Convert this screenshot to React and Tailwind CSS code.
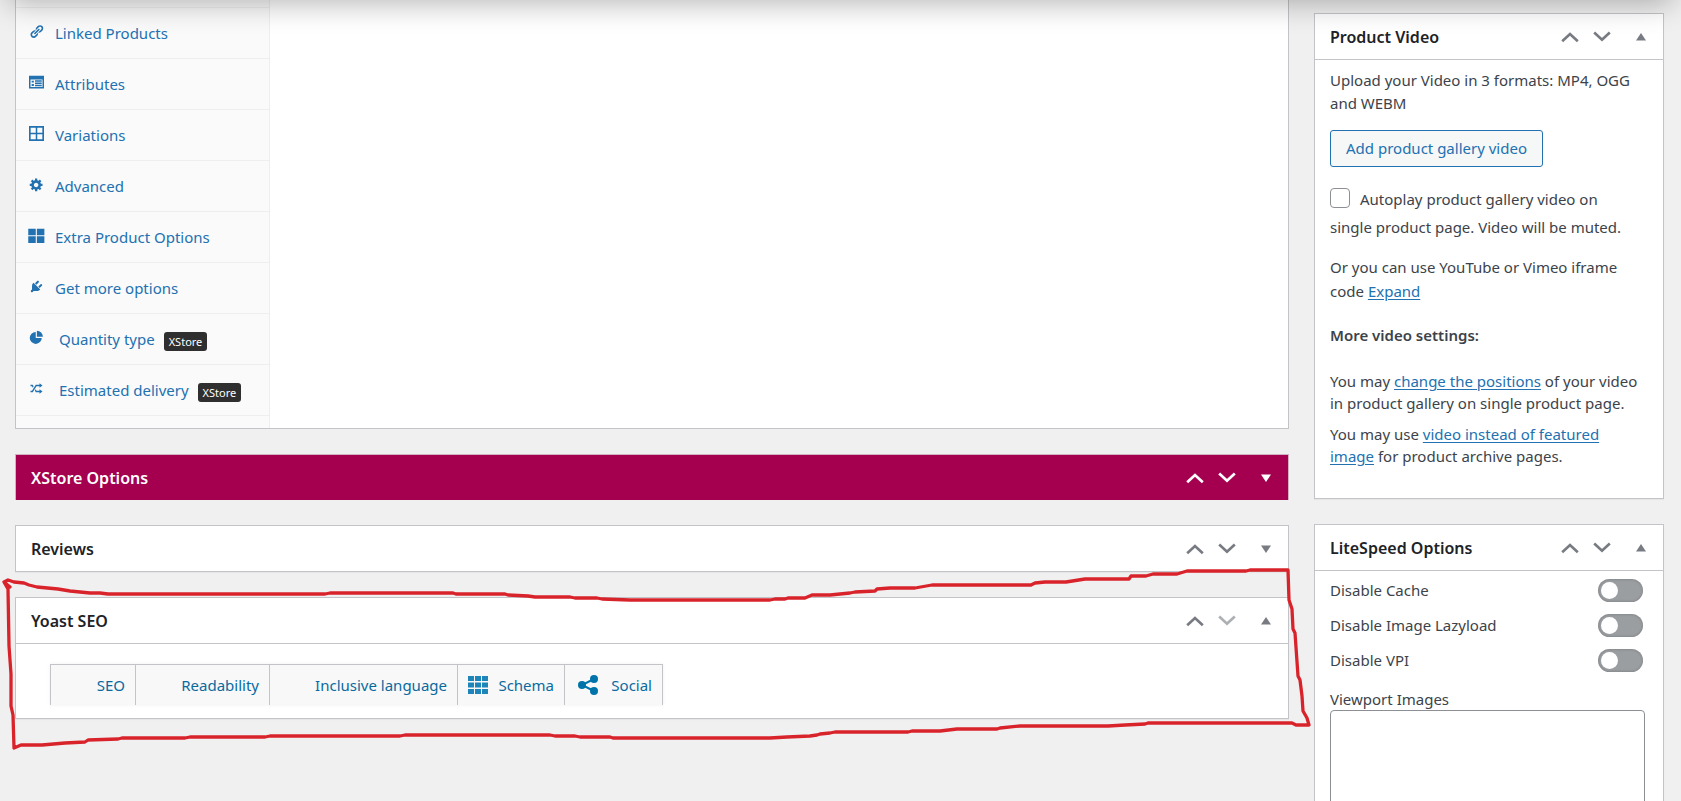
import React from 'react';

const tabs = [
  { label: 'Linked Products', icon: 'link' },
  { label: 'Attributes', icon: 'attributes' },
  { label: 'Variations', icon: 'variations' },
  { label: 'Advanced', icon: 'gear' },
  { label: 'Extra Product Options', icon: 'blocks' },
  { label: 'Get more options', icon: 'plug' },
  { label: 'Quantity type', icon: 'pie', badge: 'XStore' },
  { label: 'Estimated delivery', icon: 'shuffle', badge: 'XStore' },
];

const cacheOptions = [
  { id: 'disable-cache', label: 'Disable Cache' },
  { id: 'disable-lazyload', label: 'Disable Image Lazyload' },
  { id: 'disable-vpi', label: 'Disable VPI' },
];

// 20x20 glyphs
const glyphs = {
  link: (
    <path d="M17.74 2.76c1.68 1.69 1.68 4.41 0 6.1l-1.53 1.52c-1.12 1.12-2.7 1.47-4.14 1.09l2.62-2.61.76-.77.76-.76c.84-.84.84-2.2 0-3.04-.84-.85-2.2-.85-3.04 0l-.77.76-3.38 3.38c-.37-1.44-.02-3.02 1.1-4.14l1.52-1.53c1.69-1.68 4.42-1.68 6.1 0zM8.59 13.43l5.34-5.34c.42-.42.42-1.1 0-1.52-.44-.43-1.13-.39-1.53 0l-5.33 5.34c-.42.42-.42 1.1 0 1.52.44.43 1.13.39 1.52 0zm-.76 2.29l4.14-4.15c.38 1.44.03 3.02-1.09 4.14l-1.52 1.53c-1.69 1.68-4.41 1.68-6.1 0-1.68-1.68-1.68-4.42 0-6.1l1.53-1.52c1.12-1.12 2.7-1.47 4.14-1.1l-4.14 4.15c-.85.84-.85 2.2 0 3.05.84.84 2.2.84 3.04 0z" />
  ),
  attributes: (
    <path fillRule="evenodd" d="M0 1h20v17H0zM2 6v10h16V6zM3.500 7.500h3v2.500h-3zM8 7h9v2H8zM8 10h9v2H8zM8 13h9v2H8zM3.500 12h3v2.500h-3z" />
  ),
  variations: (
    <path fillRule="evenodd" d="M0 0h20v20H0zM2.200 2.200V9H9V2.200zM11 2.200V9h6.800V2.200zM2.200 11v6.800H9V11zM11 11v6.800h6.800V11z" />
  ),
  gear: (
    <path d="M18 12h-2.180c-.17.7-.44 1.350-.81 1.930l1.540 1.540-2.100 2.100-1.540-1.540c-.58.36-1.230.63-1.910.79V19H8v-2.180c-.68-.16-1.330-.43-1.910-.79l-1.540 1.540-2.120-2.120 1.540-1.540c-.36-.58-.63-1.230-.79-1.910H1V9.030h2.170c.16-.7.44-1.350.8-1.940L2.430 5.550l2.100-2.100 1.540 1.540c.58-.37 1.240-.64 1.930-.81V2h3v2.180c.68.16 1.330.43 1.910.79l1.540-1.540 2.120 2.120-1.540 1.540c.36.59.64 1.240.8 1.940H18V12zm-8.500 1.500c1.660 0 3-1.340 3-3s-1.340-3-3-3-3 1.340-3 3 1.340 3 3 3z" />
  ),
  blocks: <path d="M-1 1h10v8.500H-1zM10.500 1h10v8.500h-10zM-1 11h10v9H-1zM10.500 11h10v9h-10z" />,
  plug: (
    <path d="M13.110 4.360L9.870 7.600 8 5.730l3.240-3.240c.35-.34 1.050-.2 1.560.32.52.51.66 1.210.31 1.550zm-8 1.770l.91-1.120 9.010 9.010-1.190.84c-.71.71-2.630 1.160-3.820 1.160H6.140L4.900 17.260c-.59.59-1.540.59-2.120 0-.59-.58-.59-1.530 0-2.120l1.240-1.240v-3.880c0-1.130.4-3.190 1.090-3.890zm7.260 3.970l3.240-3.240c.34-.35 1.040-.21 1.550.31.52.51.66 1.210.31 1.550l-3.240 3.250z" />
  ),
  pie: (
    <path d="M9 2.500a8 8 0 1 0 8 8H9zM10.500 1v8H18.500A8 8 0 0 0 10.500 1z" />
  ),
  shuffle: (
    <path d="M18 6.010L14 9V7h-4l-5 8H2v-2h2l5-8h5V3zM2 5h3l1.150 2.170-1.120 1.800L4 7H2V5zm16 9.010L14 17v-2H9l-1.150-2.170 1.120-1.800L10 13h4v-2z" />
  ),
};

function Glyph({ name }) {
  return (
    <svg viewBox="0 0 20 20" className="size-[15px] shrink-0 overflow-visible" fill="currentColor" aria-hidden="true">
      {glyphs[name]}
    </svg>
  );
}

function HandleButtons({ open, lastItem }) {
  return (
    <div className="flex items-center">
      <button type="button" aria-label="Move up" className="flex w-8 justify-center">
        <svg width="18" height="12" viewBox="0 0 18 12" fill="none" stroke="currentColor" strokeWidth="2.700">
          <path d="M1.200 10.200L9 3l7.800 7.200" />
        </svg>
      </button>
      <button type="button" aria-label="Move down" className={lastItem ? 'flex w-8 justify-center opacity-60' : 'flex w-8 justify-center'}>
        <svg width="18" height="12" viewBox="0 0 18 12" fill="none" stroke="currentColor" strokeWidth="2.700">
          <path d="M1.200 1.500L9 8.700l7.800-7.200" />
        </svg>
      </button>
      <button type="button" aria-label="Toggle panel" className="flex w-[45px] justify-center">
        <svg width="10" height="8" viewBox="0 0 10 8" fill="currentColor">
          {open ? <path d="M5 0l5 7.500H0z" /> : <path d="M0 .5h10L5 8z" />}
        </svg>
      </button>
    </div>
  );
}

function Postbox({ title, open = false, lastItem = false, children }) {
  return (
    <section className="border border-[#c3c4c7] bg-white shadow-[0_1px_1px_rgba(0,0,0,0.04)]">
      <div className={open ? 'flex h-[46px] items-center justify-between border-b border-[#c3c4c7] pl-[15px] text-[#787c82]' : 'flex h-[45px] items-center justify-between pl-[15px] text-[#787c82]'}>
        <h2 className="text-[16px] font-semibold text-[#1d2327]">{title}</h2>
        <HandleButtons open={open} lastItem={lastItem} />
      </div>
      {children}
    </section>
  );
}

function ProductData() {
  return (
    <section className="flex border border-t-0 border-[#c3c4c7] bg-white">
      <ul className="w-[254px] border-r border-[#eee] bg-[#fafafa] pb-3 pt-[7px]">
        {tabs.map((tab, i) => (
          <li key={tab.label} className={i === 0 ? 'border-y border-[#eee]' : 'border-b border-[#eee]'}>
            <a href="#" className="flex h-[50px] items-center pl-[13px] text-[15px] text-[#2271b1]">
              <span className="pb-1"><Glyph name={tab.icon} /></span>
              <span className={tab.badge ? 'pl-[15px]' : 'pl-[11px]'}>{tab.label}</span>
              {tab.badge && (
                <span className="ml-[9px] mt-1 rounded-[3px] bg-[#2f2f2f] px-[5px] text-[11px] leading-[19px] text-white">{tab.badge}</span>
              )}
            </a>
          </li>
        ))}
      </ul>
      <div className="flex-1" />
    </section>
  );
}

function YoastTabs() {
  const tab = 'flex h-10 items-center justify-end border-l border-[#c3c4c7] pr-[10px]';
  return (
    <div className="px-[34px] pb-[13px] pt-5">
      <div className="flex w-fit border-r border-t border-[#c3c4c7] bg-[#f8f8f8] text-[15px] text-[#0a6a9f] shadow-[0_0_4px_rgba(0,0,0,0.06)]">
        <a href="#" className={`${tab} w-[85px]`}>SEO</a>
        <a href="#" className={`${tab} w-[134px]`}>Readability</a>
        <a href="#" className={`${tab} w-[188px]`}>Inclusive language</a>
        <a href="#" className={`${tab} w-[107px] gap-[10px]`}>
          <svg width="20" height="18" viewBox="0 0 20 18" fill="#1e85ba" aria-hidden="true">
            <path d="M0 0h6v5H0zM7 0h6v5H7zM14 0h6v5h-6zM0 6.500h6v5H0zM7 6.500h6v5H7zM14 6.500h6v5h-6zM0 13h6v5H0zM7 13h6v5H7zM14 13h6v5h-6z" />
          </svg>
          Schema
        </a>
        <a href="#" className={`${tab} w-[98px] gap-[13px]`}>
          <svg width="20" height="20" viewBox="0 0 20 20" fill="#0073aa" aria-hidden="true">
            <circle cx="4" cy="10" r="4" />
            <circle cx="16" cy="4" r="4" />
            <circle cx="16" cy="16" r="4" />
            <path d="M16 4L4 10l12 6" fill="none" stroke="#0073aa" strokeWidth="2" />
          </svg>
          Social
        </a>
      </div>
    </div>
  );
}

function ProductVideo() {
  const link = 'text-[#2271b1] underline underline-offset-2';
  return (
    <Postbox title="Product Video" open>
      <div className="pb-[31px] pl-[15px] pr-6 pt-[9px] text-[15px]">
        <p className="leading-[23px]">Upload your Video in 3 formats: MP4, OGG and WEBM</p>
        <button type="button" className="mt-[15px] flex h-[37px] items-center rounded-[3px] border border-[#2271b1] bg-[#f6f7f7] px-[15px] text-[#2271b1]">
          Add product gallery video
        </button>
        <label className="mt-[18px] block leading-7">
          <input type="checkbox" className="mr-[10px] size-5 appearance-none rounded-[4px] border border-[#8c8f94] bg-white align-[-3px]" />
          Autoplay product gallery video on single product page. Video will be muted.
        </label>
        <p className="mt-[14px] leading-6">
          Or you can use YouTube or Vimeo iframe code <a href="#" className={link}>Expand</a>
        </p>
        <p className="mt-5 font-semibold leading-6">More video settings:</p>
        <p className="mt-[23px] leading-[22px]">
          You may <a href="#" className={link}>change the positions</a> of your video in product gallery on single product page.
        </p>
        <p className="mt-[9px] leading-[22px]">
          You may use <a href="#" className={link}>video instead of featured image</a> for product archive pages.
        </p>
      </div>
    </Postbox>
  );
}

function LiteSpeedOptions() {
  return (
    <Postbox title="LiteSpeed Options" open>
      <div className="px-[15px] pb-5 pt-[2px] text-[15px]">
        {cacheOptions.map((opt) => (
          <div key={opt.id} className="flex h-[35px] items-center justify-between pr-[5px]">
            <label htmlFor={opt.id}>{opt.label}</label>
            <input
              id={opt.id}
              type="checkbox"
              className="flex h-[23px] w-[45px] appearance-none items-center rounded-full bg-[#9b9ea1] px-[3px] shadow-[inset_0_0_3px_rgba(0,0,0,0.25)] before:size-[17px] before:rounded-full before:bg-white"
            />
          </div>
        ))}
        <label htmlFor="viewport-images" className="mt-[10px] block leading-[22px]">Viewport Images</label>
        <div className="pr-[3px]">
          <textarea id="viewport-images" rows="6" className="block w-full resize-none rounded-[4px] border border-[#8c8f94] bg-white" />
        </div>
      </div>
    </Postbox>
  );
}

// Hand-drawn outline around the Yoast box
function Marker() {
  return (
    <svg className="pointer-events-none absolute left-0 top-0" width="1320" height="760" viewBox="0 0 1320 760" fill="none" stroke="#d9232b" strokeWidth="3.300" strokeLinejoin="round" strokeLinecap="round" aria-hidden="true">
      <path d="M10 587L4 582L8 580L14 582L24 583L29 585L37 587L58 589L70 591L80 592L90 593L100 593L108 594L325 594L330 593L453 593L456 594L505 594L508 595L528 596L535 597L570 597L575 598L597 598L602 599L630 600L770 600L775 599L785 599L788 598L805 598L812 595L830 595L850 593L855 592L875 591L877 589L890 588L915 588L932 585L1031 585L1035 583L1045 582L1066 582L1085 579L1129 579L1131 576L1146 576L1153 574L1177 574L1187 571L1246 571L1250 570L1288 570L1289 600L1292 609L1293 629L1295 633L1298 676L1300 680L1302 696L1303 711L1307 718L1309 725L1296 725L1292 723L1148 723L1145 724L1125 725L1108 726L1020 726L1000 728L997 729L957 729L940 731L912 731L908 732L835 732L830 733L820 734L817 735L810 736L787 737L770 738L613 738L610 737L580 737L575 736L555 736L550 735L405 735L400 736L270 736L265 737L190 737L185 738L122 738L118 739L88 740L85 742L65 743L42 745L21 745L14 748L13 715L11 706L11 674L9 646L8 589L4 582" />
    </svg>
  );
}

export default function App() {
  return (
    <div className="relative h-screen overflow-hidden bg-[#f0f0f1] font-['Noto_Sans','Open_Sans',sans-serif] text-[#3c434a]">
      <div className="flex items-start gap-[25px] pl-[15px] pr-[17px]">
        <main className="flex min-w-0 flex-1 flex-col gap-[25px]">
          <ProductData />
          <section className="flex h-[46px] items-center justify-between border border-b-0 border-[#d3b3c3] bg-[#a4004f] bg-clip-padding pl-[15px] text-white">
            <h2 className="text-[16px] font-semibold">XStore Options</h2>
            <HandleButtons />
          </section>
          <Postbox title="Reviews" />
          <Postbox title="Yoast SEO" open lastItem>
            <YoastTabs />
          </Postbox>
        </main>
        <aside className="flex w-[350px] shrink-0 flex-col gap-[25px] pt-[13px]">
          <ProductVideo />
          <LiteSpeedOptions />
        </aside>
      </div>
      <div className="pointer-events-none absolute inset-x-2 -top-10 h-10 shadow-[0_3px_30px_rgba(0,0,0,0.3)]" />
      <Marker />
    </div>
  );
}
